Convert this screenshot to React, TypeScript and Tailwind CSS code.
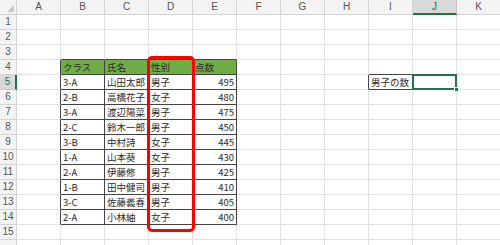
import React from "react";

const COLS = ["A", "B", "C", "D", "E", "F", "G", "H", "I", "J", "K"];
const ROWS = Array.from({ length: 16 }, (_, i) => i + 1);

const DATA: [string, string, string, string][] = [
  ["クラス", "氏名", "性別", "点数"],
  ["3-A", "山田太郎", "男子", "495"],
  ["2-B", "高橋花子", "女子", "480"],
  ["3-A", "渡辺陽菜", "男子", "475"],
  ["2-C", "鈴木一郎", "男子", "450"],
  ["3-B", "中村詩", "女子", "445"],
  ["1-A", "山本葵", "女子", "430"],
  ["2-A", "伊藤修", "男子", "425"],
  ["1-B", "田中健司", "男子", "410"],
  ["3-C", "佐藤義春", "男子", "405"],
  ["2-A", "小林紬", "女子", "400"],
];

const FONT = {
  fontFamily: '"Noto Sans CJK JP", "Noto Sans", "Liberation Sans", sans-serif',
};

function Cell({ r, c }: { r: number; c: number }) {
  // c: 0 = A ... 10 = K
  const inTable = r >= 4 && r <= 14 && c >= 1 && c <= 4;
  const rightDark =
    inTable || (c === 0 && r >= 4 && r <= 14) || (r === 5 && (c === 7 || c === 8));
  const bottomDark =
    inTable || (r === 3 && c >= 1 && c <= 4) || (r === 5 && c === 8) || (r === 4 && c === 8);
  const isHeader = r === 4 && c >= 1 && c <= 4;
  let text = "";
  let right = false;
  if (r >= 4 && r <= 14 && c >= 1 && c <= 4) {
    text = DATA[r - 4][c - 1];
    right = r > 4 && c === 4;
  }
  if (r === 5 && c === 8) text = "男子の数";
  const selected = r === 5 && c === 9;

  return (
    <div
      className={[
        "relative box-border h-[15px] border-r border-b overflow-visible whitespace-nowrap flex items-end leading-[13px] text-[9.5px] text-[#2a2a2a]",
        rightDark ? "border-r-[#444]" : "border-r-[#e2e2e2]",
        bottomDark ? "border-b-[#444]" : "border-b-[#e2e2e2]",
        isHeader ? "bg-[#70ad47]" : "bg-white",
        right ? "justify-end pr-[2px]" : "justify-start pl-[2px]",
      ].join(" ")}
    >
      {text && <span className="relative z-[1]">{text}</span>}
      {selected && (
        <div className="absolute left-[-1px] top-[-1px] w-[45px] h-[16px] border-2 border-[#217346] z-[2]">
          <div className="absolute right-[-4px] bottom-[-4px] w-[5px] h-[5px] bg-[#217346] border border-white" />
        </div>
      )}
    </div>
  );
}

export default function App() {
  return (
    <div className="relative w-[500px] h-[245px] overflow-hidden bg-white" style={FONT}>
      <div className="grid grid-cols-[17px_repeat(11,44px)] grid-rows-[15px_repeat(16,15px)]">
        {/* corner */}
        <div className="relative box-border border-r border-b border-r-[#d4d4d4] border-b-[#d4d4d4] bg-[#f3f3f3]">
          <svg className="absolute right-[2px] bottom-[2px]" width="7" height="7" viewBox="0 0 7 7">
            <polygon points="7,0 7,7 0,7" fill="#c8c8c8" />
          </svg>
        </div>
        {COLS.map((c) => (
          <div
            key={c}
            className={[
              "box-border border-r flex items-center justify-center text-[10px] leading-none",
              c === "J"
                ? "bg-[#d9d9d9] text-[#217346] border-b-2 border-b-[#217346] border-r-[#c6c6c6]"
                : "bg-[#f3f3f3] text-[#555] border-b border-b-[#d4d4d4] border-r-[#d4d4d4]",
            ].join(" ")}
            style={{ fontFamily: '"Liberation Sans", sans-serif' }}
          >
            {c}
          </div>
        ))}
        {ROWS.map((r) => (
          <React.Fragment key={r}>
            <div
              className={[
                "box-border border-b flex items-center justify-center text-[10px] leading-none",
                r === 5
                  ? "bg-[#d9d9d9] text-[#217346] border-r-2 border-r-[#217346] border-b-[#c6c6c6]"
                  : "bg-[#f3f3f3] text-[#555] border-r border-r-[#d4d4d4] border-b-[#d4d4d4]",
              ].join(" ")}
              style={{ fontFamily: '"Liberation Sans", sans-serif' }}
            >
              {r <= 15 ? r : ""}
            </div>
            {COLS.map((_, ci) => (
              <Cell key={ci} r={r} c={ci} />
            ))}
          </React.Fragment>
        ))}
      </div>
      {/* red highlight annotation */}
      <div className="absolute left-[147px] top-[56px] w-[48px] h-[176px] border-[3px] border-[#ff0000] rounded-[5px] pointer-events-none z-[5]" />
    </div>
  );
}
